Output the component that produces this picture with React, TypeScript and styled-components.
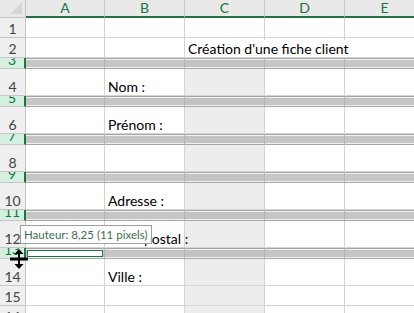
import { Fragment } from 'react'
import styled, { createGlobalStyle } from 'styled-components'

const GlobalStyle = createGlobalStyle`
  *, *::before, *::after {
    box-sizing: border-box;
  }
  html, body {
    margin: 0;
    padding: 0;
    background: #ffffff;
  }
  body {
    font-family: Lato, "Liberation Sans", sans-serif;
  }
`

const COLS = ['A', 'B', 'C', 'D', 'E']

type RowDef = {
  n: number
  h: number
  selected?: boolean
  b?: string
  c?: string
}

const ROWS: RowDef[] = [
  { n: 1, h: 20 },
  { n: 2, h: 20, c: "Création d'une fiche client" },
  { n: 3, h: 11, selected: true },
  { n: 4, h: 27, b: 'Nom :' },
  { n: 5, h: 11, selected: true },
  { n: 6, h: 27, b: 'Prénom :' },
  { n: 7, h: 11, selected: true },
  { n: 8, h: 27 },
  { n: 9, h: 11, selected: true },
  { n: 10, h: 27, b: 'Adresse :' },
  { n: 11, h: 11, selected: true },
  { n: 12, h: 27, b: 'Code postal :' },
  { n: 13, h: 11, selected: true },
  { n: 14, h: 27, b: 'Ville :' },
  { n: 15, h: 20 },
  { n: 16, h: 20 },
]

const Sheet = styled.div`
  position: relative;
  width: 414px;
  height: 313px;
  overflow: hidden;
  background: #ffffff;
  display: grid;
  grid-template-columns: 26px 79px 80px 80px 80px 80px;
  grid-template-rows: 18px ${ROWS.map((r) => `${r.h}px`).join(' ')};
  font-family: Lato, "Liberation Sans", sans-serif;
`

const Corner = styled.div`
  position: relative;
  background: #e9e9e9;
  border-right: 1px solid #c6c6c6;
  border-bottom: 1px solid #c6c6c6;
  overflow: hidden;

  &::after {
    content: '';
    position: absolute;
    right: 3px;
    bottom: 3px;
    border-left: 12px solid transparent;
    border-bottom: 12px solid #d6d6d6;
  }
`

const ColHeader = styled.div`
  display: flex;
  align-items: center;
  justify-content: center;
  min-height: 0;
  background: #e9e9e9;
  border-right: 1px solid #c6c6c6;
  border-bottom: 2px solid #217346;
  color: #217346;
  font-size: 14px;
  line-height: 16px;
`

const RowHeader = styled.div<{ $selected?: boolean }>`
  display: flex;
  align-items: flex-end;
  justify-content: center;
  min-height: 0;
  overflow: hidden;
  font-size: 14px;
  line-height: 16px;
  background: ${({ $selected }) => ($selected ? '#d3f0e0' : '#efefef')};
  color: ${({ $selected }) => ($selected ? '#217346' : '#444444')};
  border-bottom: 1px solid #c6c6c6;
  border-right: ${({ $selected }) => ($selected ? '2px solid #217346' : '1px solid #c6c6c6')};
`

const Cell = styled.div<{ $shade?: boolean; $selected?: boolean; $open?: boolean }>`
  position: relative;
  display: flex;
  align-items: flex-end;
  min-height: 0;
  padding: 0 0 0 3px;
  font-size: 14px;
  line-height: 17px;
  color: #000000;
  white-space: nowrap;
  overflow: ${({ $open }) => ($open ? 'visible' : 'hidden')};
  z-index: ${({ $open }) => ($open ? 1 : 0)};
  background: ${({ $shade, $selected }) =>
    $selected ? ($shade ? '#c2c2c2' : '#c6c6c6') : $shade ? '#ededed' : '#ffffff'};
  border-right: 1px solid ${({ $selected }) => ($selected ? '#b4b4b4' : '#d4d4d4')};
  border-bottom: 1px solid ${({ $selected }) => ($selected ? '#a6a6a6' : '#d4d4d4')};
  box-shadow: ${({ $selected }) =>
    $selected ? 'inset 0 1px 0 #a6a6a6, inset 0 2px 0 #f0f0f0, inset 0 -1px 0 #f0f0f0' : 'none'};
`

const Overflow = styled.span<{ $hideLine?: boolean }>`
  position: relative;
  background: ${({ $hideLine }) => ($hideLine ? '#ffffff' : 'transparent')};
  padding-right: 2px;
`

const ActiveBox = styled.div`
  position: absolute;
  inset: 2px 1px 1px 1px;
  background: #ffffff;
  border: 1px solid #217346;
`

const Tooltip = styled.div`
  position: absolute;
  left: 20px;
  top: 225px;
  height: 19px;
  padding: 0 3px;
  display: flex;
  align-items: center;
  background: #fdfdfd;
  border: 1px solid #a0a0a0;
  color: #3f6f52;
  font-size: 11.5px;
  white-space: nowrap;
  z-index: 5;
`

const Cursor = styled.svg`
  position: absolute;
  left: 9px;
  top: 249px;
  z-index: 6;
`

export default function App() {
  return (
    <>
      <GlobalStyle />
      <Sheet>
        <Corner />
        {COLS.map((c) => (
          <ColHeader key={c}>{c}</ColHeader>
        ))}
        {ROWS.map((r) => (
          <Fragment key={r.n}>
            <RowHeader $selected={r.selected}>{r.n}</RowHeader>
            {COLS.map((c) => {
              const shade = c === 'C' && r.n >= 3
              const text = c === 'B' ? r.b : c === 'C' ? r.c : undefined
              return (
                <Cell key={c} $shade={shade} $selected={r.selected} $open={!!text}>
                  {r.n === 13 && c === 'A' && <ActiveBox />}
                  {text && <Overflow $hideLine={c === 'C'}>{text}</Overflow>}
                </Cell>
              )
            })}
          </Fragment>
        ))}
        <Tooltip>Hauteur: 8,25 (11 pixels)</Tooltip>
        <Cursor width="20" height="20" viewBox="0 0 20 20">
          <rect x="1" y="8.5" width="18" height="3" fill="#000" />
          <rect x="9" y="3" width="2" height="14" fill="#000" />
          <path d="M10 0 L14.5 5 L5.5 5 Z" fill="#000" />
          <path d="M10 20 L14.5 15 L5.5 15 Z" fill="#000" />
        </Cursor>
      </Sheet>
    </>
  )
}
